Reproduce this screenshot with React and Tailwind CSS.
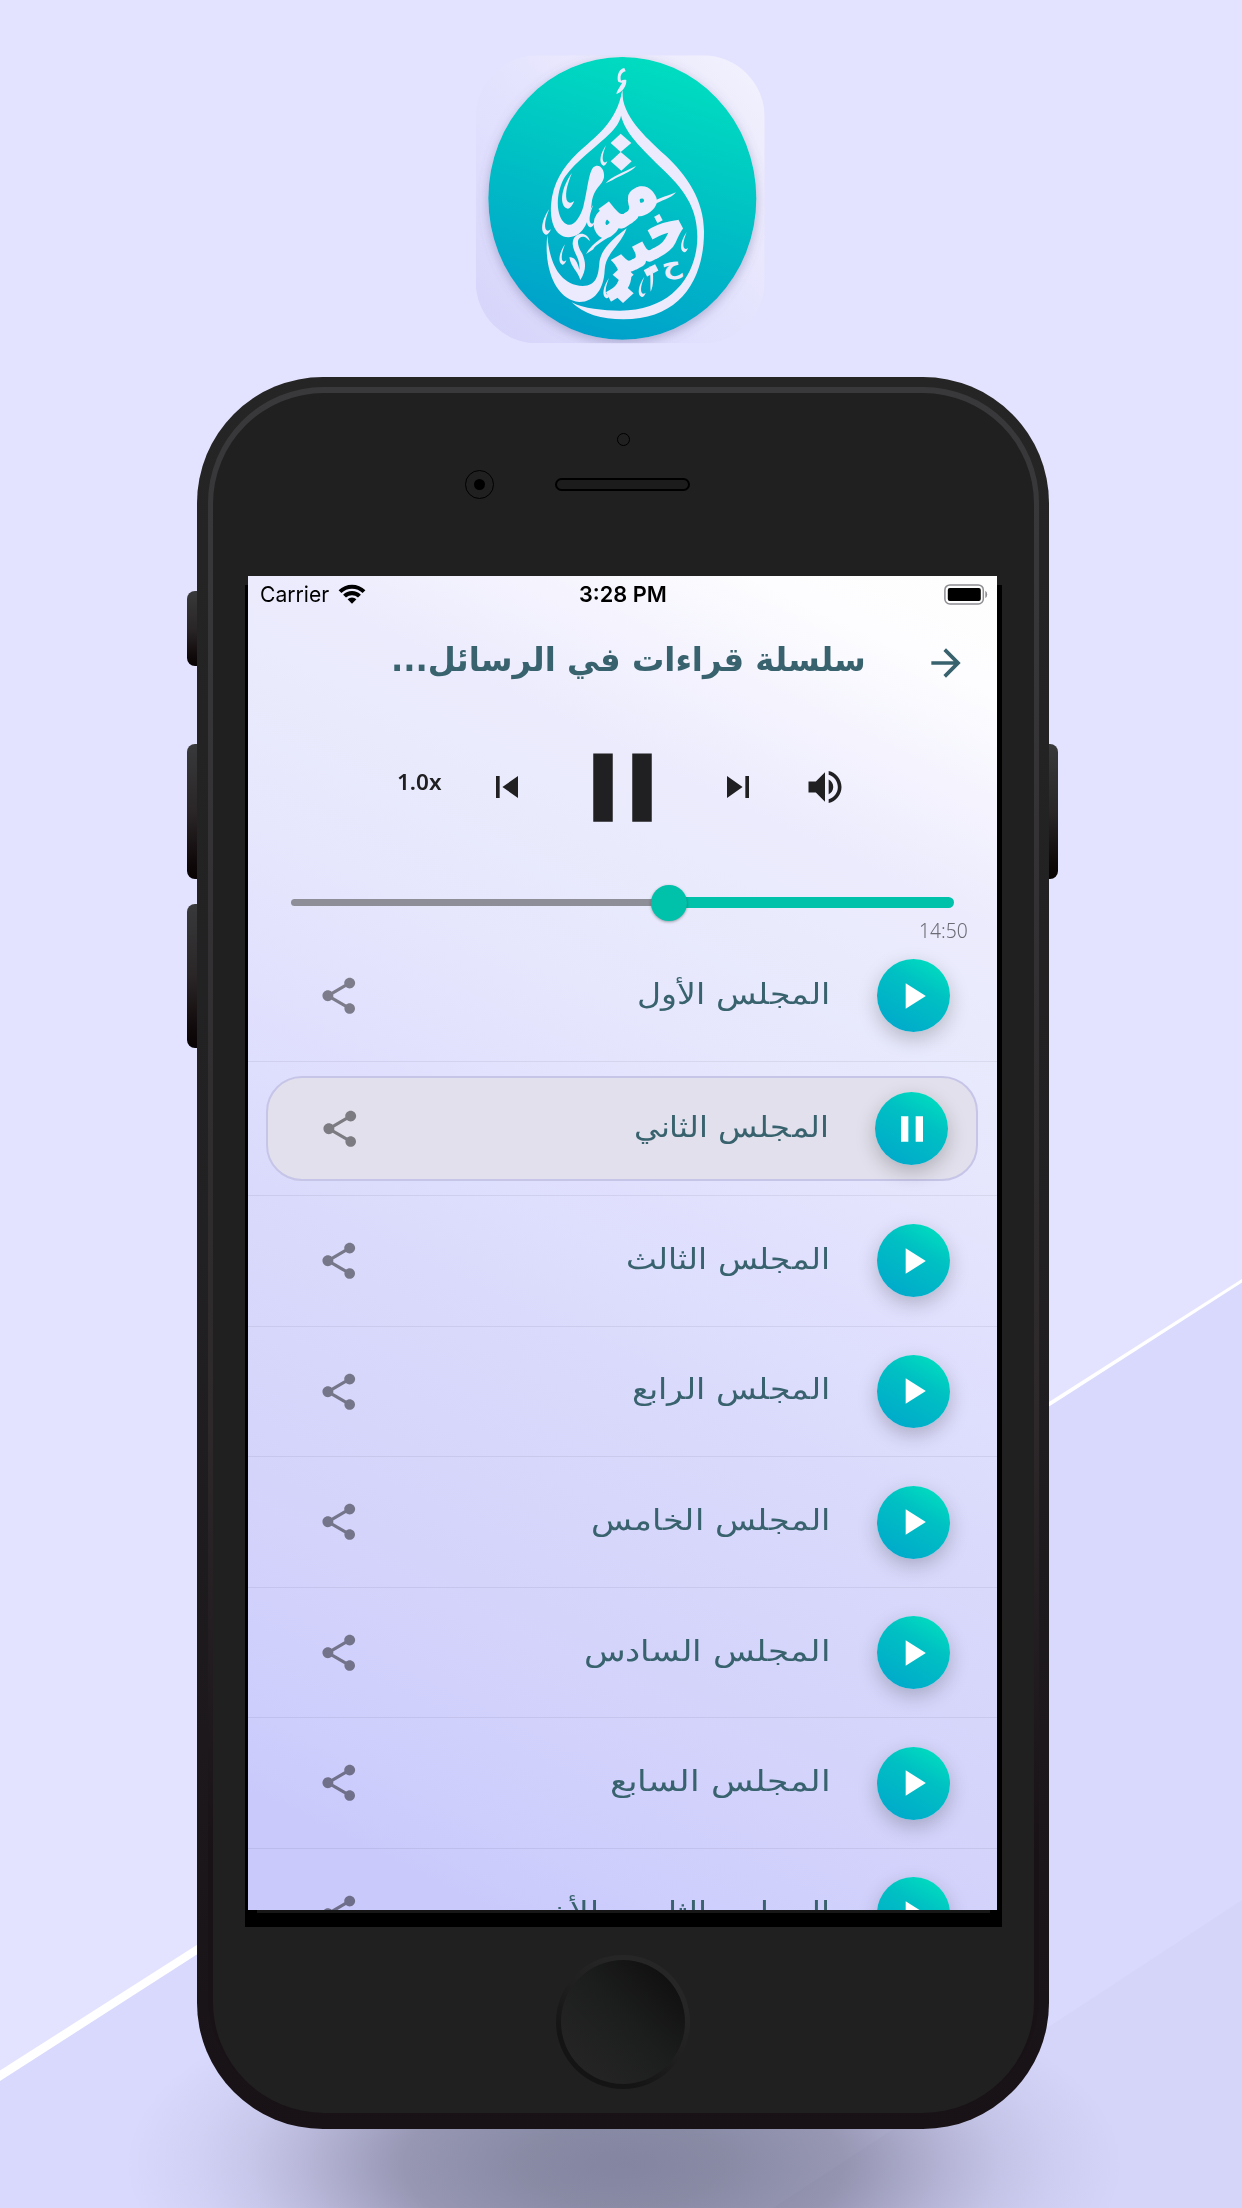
import React, { useLayoutEffect, useRef, useState } from "react";

const SESSIONS = [
  { title: "المجلس الأول", width: 193 },
  { title: "المجلس الثاني", width: 195, active: true },
  { title: "المجلس الثالث", width: 204 },
  { title: "المجلس الرابع", width: 198 },
  { title: "المجلس الخامس", width: 239 },
  { title: "المجلس السادس", width: 246 },
  { title: "المجلس السابع", width: 220 },
  { title: "المجلس الثامن والأخير", width: 308 },
];

const ICONS = {
  arrow: "M12 4l-1.41 1.41L16.17 11H4v2h12.17l-5.58 5.59L12 20l8-8z",
  prev: "M6 6h2v12H6zm3.5 6l8.5 6V6z",
  next: "M6 18l8.5-6L6 6v12zM16 6v12h2V6h-2z",
  pause: "M6 19h4V5H6v14zm8-14v14h4V5h-4z",
  play: "M8 5v14l11-7z",
  volume:
    "M3 9v6h4l5 5V4L7 9H3zm13.5 3c0-1.77-1.02-3.29-2.5-4.03v8.05c1.48-.73 2.5-2.25 2.5-4.02zM14 3.23v2.06c2.89.86 5 3.54 5 6.71s-2.11 5.85-5 6.71v2.06c4.01-.91 7-4.49 7-8.77s-2.99-7.86-7-8.77z",
  share:
    "M18 16.08c-.76 0-1.44.3-1.96.77L8.91 12.7c.05-.23.09-.46.09-.7s-.04-.47-.09-.7l7.05-4.11c.54.5 1.25.81 2.04.81 1.66 0 3-1.34 3-3s-1.34-3-3-3-3 1.34-3 3c0 .24.04.47.09.7L8.04 9.81C7.5 9.31 6.79 9 6 9c-1.66 0-3 1.34-3 3s1.34 3 3 3c.79 0 1.5-.31 2.04-.81l7.12 4.16c-.05.21-.08.43-.08.65 0 1.61 1.31 2.92 2.92 2.92s2.92-1.31 2.92-2.92-1.31-2.92-2.92-2.92z",
};

function Icon({ name, className }) {
  return (
    <svg viewBox="0 0 24 24" fill="currentColor" className={`shrink-0 ${className}`}>
      <path d={ICONS[name]} />
    </svg>
  );
}

/* Text squeezed or stretched horizontally to a given width. */
function FitText({ width, className = "", children }) {
  const ref = useRef(null);
  const [scale, setScale] = useState(1);
  useLayoutEffect(() => {
    setScale(width / ref.current.offsetWidth);
  }, [width]);
  return (
    <div className="flex shrink-0 justify-start" style={{ width }}>
      <span
        ref={ref}
        className={`inline-block shrink-0 whitespace-nowrap ${className}`}
        style={{ transform: `scaleX(${scale})` }}
      >
        {children}
      </span>
    </div>
  );
}

function Backdrop() {
  return (
    <div className="absolute inset-0">
      <svg viewBox="0 0 1242 2208" className="absolute inset-0 h-full w-full">
        <rect width="1242" height="2208" fill="#e4e3ff" />
        <path d="M0 2076L1242 1281V2208H0z" fill="#d9d9fd" />
        <path d="M0 2070.5L1242 1279V1282.5L0 2081z" fill="#fff" />
        <path d="M1242 1900L773 2208H1242z" fill="#d5d5f9" />
      </svg>
      <div className="absolute inset-0 bg-[radial-gradient(ellipse_500px_205px_at_624px_2164px,rgba(10,14,30,0.41)_0%,rgba(10,14,25,0.39)_20%,rgba(12,12,25,0.32)_44%,rgba(15,12,30,0.24)_55%,rgba(20,15,40,0.16)_65%,rgba(20,20,50,0.09)_75%,rgba(20,20,50,0.04)_86%,transparent_100%)]" />
    </div>
  );
}

const FLOURISHES = [
  [432, 348, 1], [325, 455, 1.75], [393, 530, 1.1], [260, 548, 1.25],
  [309, 645, 1], [674, 608, 1], [547, 742, 1], [441, 746, 1],
];

function Logo() {
  return (
    <svg viewBox="0 0 960 930" className="h-[310px] w-[320px]">
      <defs>
        <linearGradient id="tile" x1="0" y1="1" x2="1" y2="0">
          <stop offset="0" stopColor="#d5d4fa" />
          <stop offset=".5" stopColor="#e4e3fe" />
          <stop offset="1" stopColor="#f3f2fd" />
        </linearGradient>
        <linearGradient id="disc" x1=".35" y1="1" x2=".65" y2="0">
          <stop offset="0" stopColor="#009fcb" />
          <stop offset=".5" stopColor="#00bec5" />
          <stop offset="1" stopColor="#00dec0" />
        </linearGradient>
        <filter id="soft" x="-20%" y="-20%" width="140%" height="140%">
          <feDropShadow dx="0" dy="10" stdDeviation="16" floodColor="#606090" floodOpacity=".4" />
        </filter>
        <clipPath id="tileClip">
          <rect x="47" y="46" width="867" height="864" rx="185" />
        </clipPath>
      </defs>
      <g clipPath="url(#tileClip)">
        <rect x="47" y="46" width="867" height="864" fill="url(#tile)" />
        <ellipse cx="487" cy="475" rx="402" ry="424" fill="url(#disc)" filter="url(#soft)" />
      </g>
      <g fill="#ecebfd">
        {/* drop outline */}
        <path d="M487 150C484 225 550 285 615 345C680 405 732 480 732 575C732 720 660 838 490 838C425 838 370 822 335 787C370 806 430 812 480 812C640 812 712 700 712 590C712 500 670 445 600 380C535 315 480 265 480 200z" />
        <path d="M487 150C488 210 490 240 455 275C410 320 345 365 315 410C290 450 285 515 310 545C335 572 360 535 370 500C382 455 385 400 400 382C415 368 435 385 432 412C426 440 402 440 395 490C388 550 365 592 325 592C285 590 270 545 273 495C278 430 310 380 352 340C405 290 470 250 487 150z" />
        <path d="M262 585C266 650 290 735 368 738C410 738 415 705 418 670C420 640 440 610 500 565C480 620 436 640 434 690C432 745 405 786 358 786C290 780 250 690 262 585z" />
        {/* crown, ribbons and diamonds */}
        <path d="M493 84C478 86 470 105 474 124C478 128 482 129 487 128C474 148 468 158 470 162C486 156 500 140 499 120C494 118 488 119 483 122C480 110 482 98 497 94z" />
        <path d="M437 430C455 408 490 398 528 378C515 396 475 408 458 420z" />
        <path d="M568 500C580 475 620 470 648 457C635 475 600 482 582 495z" />
        <path d="M378 642C400 605 435 590 470 565C460 592 410 608 400 628z" />
        <path d="M482 281L514 309L482 336L452 309z" />
        <path d="M482 336L515 364L484 392L452 364z" />
        <path d="M489 676L521 704L490 731L458 704z" />
        <path d="M489 731L521 760L489 789L458 760z" />
        <path d="M390 603C380 570 338 575 338 612C340 640 362 655 358 690C352 660 340 650 328 652C334 685 352 690 361 720C380 690 378 665 366 640C348 610 350 590 372 590C380 592 384 600 390 603z" />
        <path d="M567 680C574 710 570 730 572 755C582 735 580 705 577 680z" />
        {FLOURISHES.map(([x, y, s], i) => (
          <path
            key={i}
            transform={`translate(${x} ${y}) scale(${s})`}
            d="M6-32C-10-10-18 22-2 29C3 30 8 22 10 16C5 19 1 22-3 14C-6 0 0-16 6-32z"
          />
        ))}
        <g fontFamily="'DejaVu Sans', sans-serif" fontWeight="700" stroke="#ecebfd" strokeWidth="5" direction="rtl" textAnchor="middle">
          <text transform="translate(515 545) rotate(-36) scale(1.05 1.3)" fontSize="180">مه</text>
          <text transform="translate(568 664) rotate(-28) scale(1 1.2)" fontSize="170">خير</text>
          <text transform="translate(638 700) rotate(-10)" fontSize="80" strokeWidth="0">ح</text>
        </g>
      </g>
    </svg>
  );
}

function SideButton({ className }) {
  return <div className={`absolute w-[14px] bg-linear-to-b from-[#38393b] via-[#2a2627] to-[#080304] ${className}`} />;
}

function StatusBar() {
  return (
    <div className="grid h-[36px] shrink-0 grid-cols-3 items-center pr-[9px] pl-[12px] font-['Inter',sans-serif] text-[22px] text-black">
      <div dir="ltr" className="flex items-center gap-[9px]">
        <FitText width={69} className="origin-left">Carrier</FitText>
        <svg viewBox="0 0 28 20" className="h-[20px] w-[28px]">
          <path d="M0.6 6.2A19.2 19.2 0 0 1 27.4 6.2L24.6 9A15.2 15.2 0 0 0 3.4 9z" />
          <path d="M5.1 10.7A12.8 12.8 0 0 1 22.9 10.7L20 13.5A8.8 8.8 0 0 0 8 13.5z" />
          <path d="M9.6 15.2A6.4 6.4 0 0 1 18.4 15.2L14 19.8z" />
        </svg>
      </div>
      <div className="flex justify-center pr-px">
        <FitText width={88} className="origin-left font-semibold">3:28 PM</FitText>
      </div>
      <svg viewBox="0 0 44 21" className="h-[21px] w-[44px] justify-self-end">
        <rect x=".9" y=".9" width="38.4" height="19" rx="5" fill="none" stroke="#8d8d92" strokeWidth="1.5" />
        <rect x="3.8" y="3.9" width="33" height="13" rx="2" />
        <path d="M41.3 6.8Q43.2 8 43.2 10.4T41.3 14z" fill="#8d8d92" />
      </svg>
    </div>
  );
}

function Header() {
  return (
    <div className="flex h-[116px] shrink-0 items-start justify-end pr-[29px]">
      <div dir="rtl" className="mt-[18px] mr-[58px] text-[#38626d]">
        <FitText width={475} className="origin-right font-['DejaVu_Sans',sans-serif] text-[33px] leading-[60px] font-bold">
          سلسلة قراءات في الرسائل...
        </FitText>
      </div>
      <Icon name="arrow" className="mt-[29px] h-[44px] w-[44px] text-[#38626d]" />
    </div>
  );
}

function Controls() {
  return (
    <div className="flex h-[118px] shrink-0 items-center pl-[149px] text-[#202022]">
      <div className="mr-[43px] -mt-[12px]">
        <FitText width={45} className="origin-left font-['Noto_Sans',sans-serif] text-[22px] font-semibold">1.0x</FitText>
      </div>
      <Icon name="prev" className="h-[44px] w-[44px]" />
      <Icon name="pause" className="mx-[35px] h-[117px] w-[117px]" />
      <Icon name="next" className="h-[44px] w-[44px]" />
      <Icon name="volume" className="ml-[43px] h-[44px] w-[44px]" />
    </div>
  );
}

function Seek() {
  return (
    <div className="flex h-[85px] shrink-0 flex-col pt-[38px] pr-[29px] pl-[43px]">
      <div className="flex h-[37px] shrink-0 items-center pr-[14px]">
        <div className="h-[7.5px] w-[361px] rounded-l-full bg-[#8e8e98]" />
        <div className="z-10 -ml-[1px] h-[36px] w-[36px] shrink-0 rounded-full bg-[#00c1a9] shadow-[0_1px_3px_rgba(0,0,0,0.35)]" />
        <div className="-ml-[3px] h-[11.5px] flex-1 rounded-r-full bg-[#00c1a9]" />
      </div>
      <div className="-mt-[4px] flex justify-end">
        <FitText width={49} className="origin-left font-['Noto_Sans',sans-serif] text-[20.5px] leading-[26px] font-light text-[#6c6c77]">14:50</FitText>
      </div>
    </div>
  );
}

function Row({ title, width, active }) {
  const content = (
    <>
      <Icon name="share" className={active ? "ml-[50px] h-[43.6px] w-[43.6px] text-black/45" : "ml-[69px] h-[43.6px] w-[43.6px] text-black/45"} />
      <div dir="rtl" className="mr-[46px] ml-auto -mt-[4px] text-[#38626d]">
        <FitText width={width} className="origin-right font-['DejaVu_Sans',sans-serif] text-[29px] leading-[60px] font-extralight">
          {title}
        </FitText>
      </div>
      <div
        className={`flex h-[73px] w-[73px] shrink-0 items-center justify-center rounded-full bg-linear-[210deg,#00dfbf_8%,#00c1c3_38%,#00a9cb_92%] text-white shadow-[0_7px_20px_rgba(0,0,0,0.22)] ${active ? "mr-[28px]" : "mr-[47px]"}`}
      >
        <Icon name={active ? "pause" : "play"} className="h-[44px] w-[44px]" />
      </div>
    </>
  );
  if (active) {
    return (
      <div className="h-[134.5px] shrink-0 border-b border-[#20204014] px-[18.5px] pt-[14.5px]">
        <div className="flex h-[105px] items-center rounded-[36px] border-2 border-[#c6c5e8] bg-[#e1e0ec]">{content}</div>
      </div>
    );
  }
  return <div className="flex h-[130.6px] shrink-0 items-center border-b border-[#20204014]">{content}</div>;
}

function Screen() {
  return (
    <div dir="ltr" className="flex h-[1334px] w-[749px] flex-col overflow-hidden bg-linear-[206deg,#fefefe_0%,#fdfdff_7%,#f4f3fe_14%,#ecebfd_21%,#e9ebfc_27%,#e6e6fd_36%,#e1e1fe_45%,#dadafc_57%,#d4d4fb_74%,#cecefd_88%,#c9c9fb_93%]">
      <StatusBar />
      <Header />
      <Controls />
      <Seek />
      {SESSIONS.map((s) => (
        <Row key={s.title} {...s} />
      ))}
    </div>
  );
}

function Phone() {
  return (
    <div className="relative mx-auto h-[1752px] w-[852px] translate-x-[2px]">
      <SideButton className="top-[214px] -left-[10px] h-[75px] rounded-l-lg" />
      <SideButton className="top-[367px] -left-[10px] h-[135px] rounded-l-lg" />
      <SideButton className="top-[527px] -left-[10px] h-[144px] rounded-l-lg" />
      <SideButton className="top-[367px] -right-[9px] h-[135px] rounded-r-lg" />
      <div className="relative h-full rounded-[126px] bg-linear-to-b from-[#252525] via-[#212022] to-[#181216] px-[10.5px] pt-[10px] pb-[16px]">
        <div className="h-full rounded-[116px] bg-linear-to-b from-[#39393b] via-[#2d292b] via-60% to-[#181216] to-85% px-[5px] pt-[6px]">
          <div className="flex h-full flex-col items-center rounded-[111px] bg-[#202020]">
            <div className="mt-[40px] h-[13px] w-[13px] rounded-full border border-black" />
            <div className="mt-[24px] flex w-full items-center pl-[252.5px]">
              <div className="flex h-[29px] w-[29px] items-center justify-center rounded-full border-[1.5px] border-black">
                <div className="h-[11px] w-[11px] rounded-full bg-black" />
              </div>
              <div className="ml-[61px] h-[13px] w-[135px] rounded-full border-2 border-black bg-[#1c1c1c]" />
            </div>
            <div className="mt-[77px] w-[757px] bg-[linear-gradient(#202020_9px,#000_9px)] pb-[17px] pl-[3px]">
              <Screen />
              <div className="-mb-[3px] ml-[9px] h-[3px] w-[733px] bg-[#171717]" />
            </div>
            <div className="mt-[28px] flex h-[134px] w-[134px] items-center justify-center rounded-full bg-linear-[215deg,#262626_25%,#202020_48%,#141414_75%]">
              <div className="h-[124px] w-[124px] rounded-full bg-linear-[225deg,#111_15%,#1c1e1d_48%,#242424_85%]" />
            </div>
          </div>
        </div>
      </div>
    </div>
  );
}

export default function App() {
  return (
    <main className="relative h-[2208px] w-[1242px] overflow-hidden">
      <Backdrop />
      <div className="relative flex flex-col pt-[40px]">
        <div className="flex h-[337px] justify-center pr-[2px]">
          <Logo />
        </div>
        <Phone />
      </div>
    </main>
  );
}
